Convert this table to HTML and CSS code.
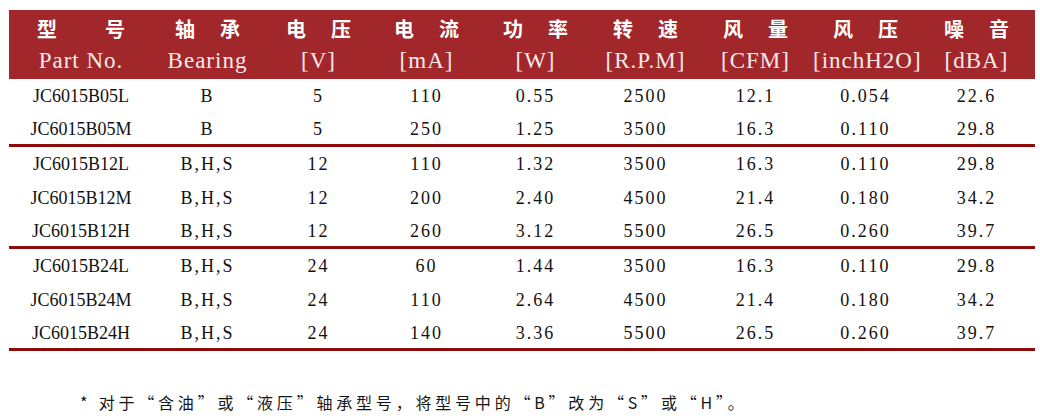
FILE: index.html
```html
<!DOCTYPE html>
<html lang="zh-CN">
<head>
<meta charset="utf-8">
<title>JC6015 规格表</title>
<link rel="stylesheet" href="styles.css">
</head>
<body>
<div class="spec">
  <div class="head">
    <div class="row head-zh">
      <div class="zh wide"><span>型</span><span>号</span></div>
      <div class="zh"><span>轴</span><span>承</span></div>
      <div class="zh"><span>电</span><span>压</span></div>
      <div class="zh"><span>电</span><span>流</span></div>
      <div class="zh"><span>功</span><span>率</span></div>
      <div class="zh"><span>转</span><span>速</span></div>
      <div class="zh"><span>风</span><span>量</span></div>
      <div class="zh"><span>风</span><span>压</span></div>
      <div class="zh"><span>噪</span><span>音</span></div>
    </div>
    <div class="row head-en">
      <div>Part No.</div>
      <div>Bearing</div>
      <div>[V]</div>
      <div>[mA]</div>
      <div>[W]</div>
      <div>[R.P.M]</div>
      <div>[CFM]</div>
      <div>[inchH2O]</div>
      <div>[dBA]</div>
    </div>
  </div>

  <div class="row data"><div class="pn">JC6015B05L</div><div class="brg">B</div><div>5</div><div>110</div><div>0.55</div><div>2500</div><div>12.1</div><div>0.054</div><div>22.6</div></div>
  <div class="row data sep"><div class="pn">JC6015B05M</div><div class="brg">B</div><div>5</div><div>250</div><div>1.25</div><div>3500</div><div>16.3</div><div>0.110</div><div>29.8</div></div>

  <div class="row data"><div class="pn">JC6015B12L</div><div class="brg">B,H,S</div><div>12</div><div>110</div><div>1.32</div><div>3500</div><div>16.3</div><div>0.110</div><div>29.8</div></div>
  <div class="row data"><div class="pn">JC6015B12M</div><div class="brg">B,H,S</div><div>12</div><div>200</div><div>2.40</div><div>4500</div><div>21.4</div><div>0.180</div><div>34.2</div></div>
  <div class="row data sep"><div class="pn">JC6015B12H</div><div class="brg">B,H,S</div><div>12</div><div>260</div><div>3.12</div><div>5500</div><div>26.5</div><div>0.260</div><div>39.7</div></div>

  <div class="row data"><div class="pn">JC6015B24L</div><div class="brg">B,H,S</div><div>24</div><div>60</div><div>1.44</div><div>3500</div><div>16.3</div><div>0.110</div><div>29.8</div></div>
  <div class="row data"><div class="pn">JC6015B24M</div><div class="brg">B,H,S</div><div>24</div><div>110</div><div>2.64</div><div>4500</div><div>21.4</div><div>0.180</div><div>34.2</div></div>
  <div class="row data sep"><div class="pn">JC6015B24H</div><div class="brg">B,H,S</div><div>24</div><div>140</div><div>3.36</div><div>5500</div><div>26.5</div><div>0.260</div><div>39.7</div></div>
</div>

<p class="note">* 对于“含油”或“液压”轴承型号，将型号中的“B”改为“S”或“H”。</p>
</body>
</html>
```
FILE: styles.css
```css
* { box-sizing: border-box; }

html, body { background: #ffffff; }

body {
  margin: 10px 0 0 9px;
  width: 1026px;
  font-family: "Liberation Serif", "Noto Sans CJK SC", serif;
  color: #111111;
}

.spec { width: 1026px; }

.row {
  display: grid;
  grid-template-columns: 144px 109px 113px 103px 115px 105px 115px 105px 117px;
  align-items: center;
  text-align: center;
}

.head { background: #a2272b; }

.head-zh { height: 36px; padding-top: 1px; }

.zh {
  display: flex;
  justify-content: center;
  gap: 25px;
  font-family: "Noto Sans CJK SC", sans-serif;
  font-weight: 700;
  font-size: 20px;
  line-height: 20px;
  color: #ffffff;
}

.zh.wide { gap: 48px; }

.head-en {
  height: 33px;
  padding-bottom: 3px;
  font-size: 23px;
  line-height: 24px;
  letter-spacing: 1px;
  color: #f6eaee;
}

.data {
  height: 34px;
  font-size: 18px;
  line-height: 20px;
  letter-spacing: 2px;
}

.data .pn { letter-spacing: 0; }

.data.sep { border-bottom: 3px solid #8c0b0b; padding-top: 1px; }

.note {
  margin: 41px 0 0 71px;
  font-family: "Noto Sans CJK SC", sans-serif;
  font-size: 16px;
  line-height: 20px;
  letter-spacing: 3.8px;
  color: #161616;
}
```
